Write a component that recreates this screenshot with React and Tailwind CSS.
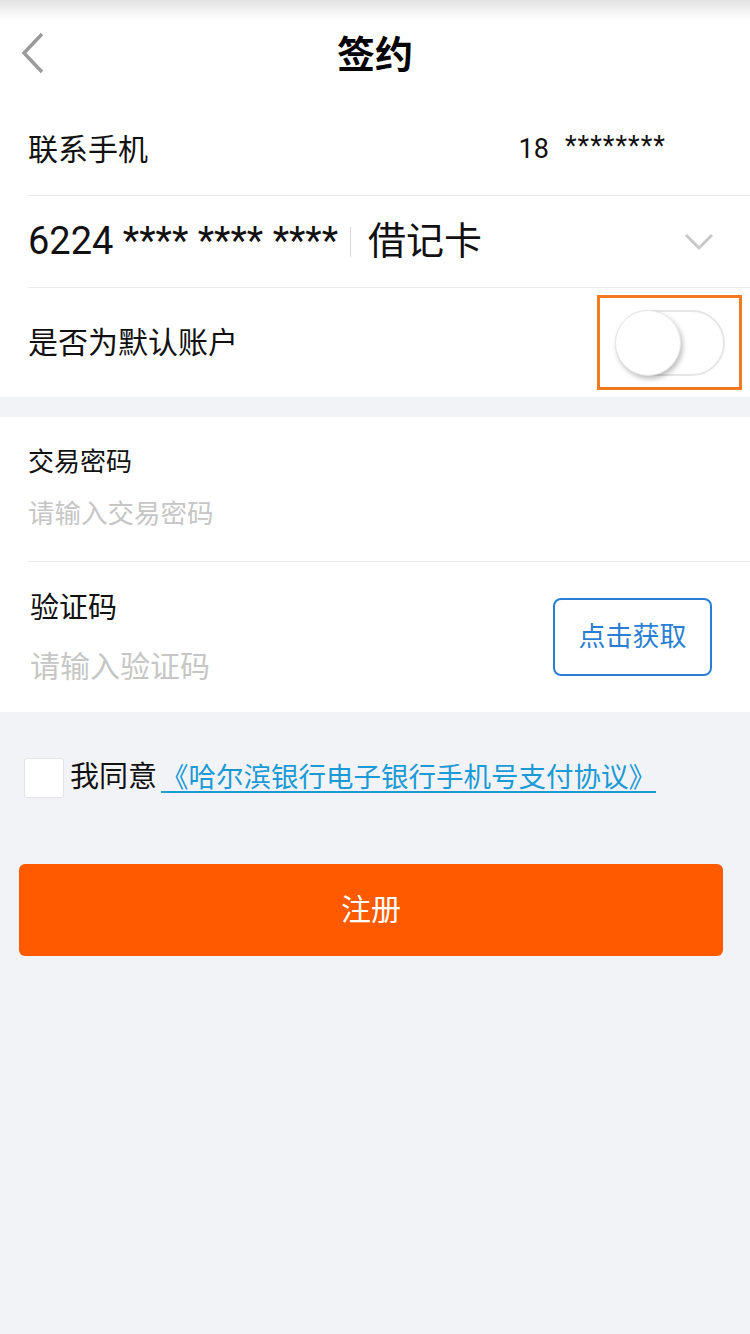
import React from 'react';

const FONT = "font-['Roboto','Noto_Sans_CJK_SC',sans-serif]";

const Toggle = () => (
  <div className="border-[3px] border-[#f47a22] w-[145px] h-[95px] flex items-center justify-center">
    <div className="relative w-[110px] h-[66px] rounded-full border-2 border-[#e6e6e6] bg-white">
      <div className="absolute left-[-2px] top-[-2px] w-[66px] h-[66px] rounded-full bg-white border border-[#e8e8e8] shadow-[2px_3px_5px_rgba(0,0,0,0.25)]"></div>
    </div>
  </div>
);

const App = () => {
  return (
    <div className={`min-h-[1334px] bg-[#f2f3f7] ${FONT}`}>
      <div className="bg-white">
        <div className="h-[20px] bg-gradient-to-b from-[#e2e2e2] to-white"></div>
        <div className="relative h-[64px] flex items-center justify-center">
          <svg className="absolute left-[20px] top-[12px] w-[26px] h-[42px]" viewBox="0 0 26 42" fill="none" stroke="#9b9b9b" strokeWidth="3.5">
            <path d="M22 2 L4 21 L22 40" />
          </svg>
          <h1 className="mt-[6px] text-[38px] font-bold text-black leading-none">签约</h1>
        </div>
        <div className="h-[20px]"></div>

        <div className="ml-[28px] h-[92px] flex items-center border-b border-[#ececec]">
          <span className="text-[30px] text-[#111]">联系手机</span>
          <span className="ml-auto mr-[84px] text-[27px] text-[#111] flex items-center">
            <span className="mr-[16px]">18</span>
            <span className="text-[27px] tracking-[1px] mt-[-6px]">********</span>
          </span>
        </div>

        <div className="ml-[28px] h-[92px] flex items-center border-b border-[#ececec]">
          <span className="text-[38px] text-[#111]">6224 **** **** ****</span>
          <span className="ml-[12px] mr-[17px] w-px h-[30px] bg-[#d8d8d8]"></span>
          <span className="text-[38px] text-[#111]">借记卡</span>
          <svg className="ml-auto mr-[36px] w-[30px] h-[18px]" viewBox="0 0 30 18" fill="none" stroke="#c9c9c9" strokeWidth="3">
            <path d="M2 2 L15 15 L28 2" />
          </svg>
        </div>

        <div className="ml-[28px] h-[109px] flex items-center pr-[8px]">
          <span className="text-[30px] text-[#111]">是否为默认账户</span>
          <div className="ml-auto">
            <Toggle />
          </div>
        </div>
      </div>

      <div className="h-[20px]"></div>

      <div className="bg-white">
        <div className="ml-[28px] pt-[27px] pb-[29px] border-b border-[#ececec]">
          <div className="text-[26px] leading-[36px] text-[#111]">交易密码</div>
          <div className="mt-[16px] text-[26.5px] leading-[36px] text-[#c6c6c6]">请输入交易密码</div>
        </div>
        <div className="ml-[30px] h-[150px] flex items-center">
          <div className="flex flex-col">
            <div className="text-[29px] leading-[36px] text-[#111]">验证码</div>
            <div className="mt-[23px] text-[30px] leading-[36px] text-[#c6c6c6]">请输入验证码</div>
          </div>
          <button className="ml-auto mr-[38px] w-[159px] h-[78px] rounded-[8px] border-2 border-[#2a7fd4] text-[27px] text-[#2a7fd4] bg-white">
            点击获取
          </button>
        </div>
      </div>

      <div className="mt-[44px] ml-[24px] flex items-center">
        <div className="w-[40px] h-[40px] bg-white border border-[#e4e4e4] rounded-[3px]"></div>
        <span className="ml-[6px] text-[29px] text-[#111]">我同意</span>
        <span className="ml-[4px] text-[27.5px] text-[#1b9ad6] underline underline-offset-[4px]">《哈尔滨银行电子银行手机号支付协议》 </span>
      </div>

      <button className="mt-[64px] ml-[19px] w-[704px] h-[92px] rounded-[6px] bg-[#ff5a00] text-white text-[30px]">
        注册
      </button>
    </div>
  );
};

export default App;
